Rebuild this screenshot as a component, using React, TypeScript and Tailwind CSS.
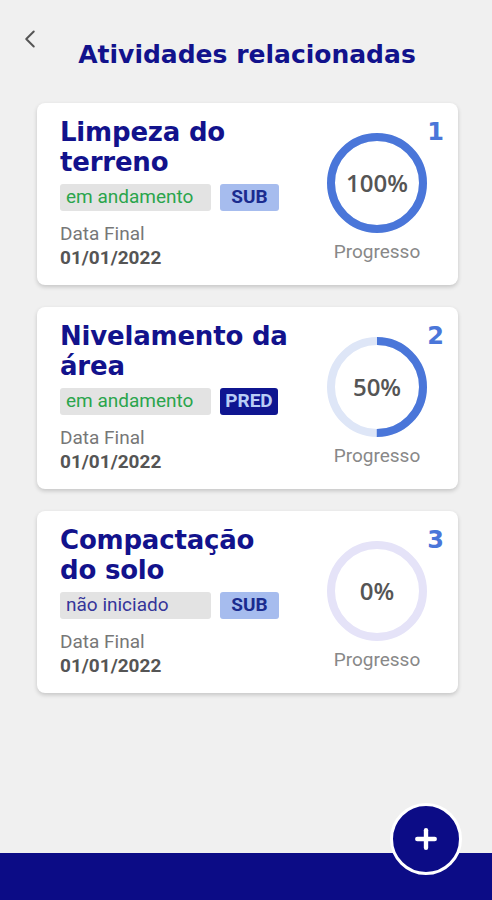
import { ChevronLeft, Plus } from "lucide-react"

type Item = {
  n: number
  title: string[]
  status: string
  statusColor: string
  tag: "SUB" | "PRED"
  pct: number
}

const items: Item[] = [
  { n: 1, title: ["Limpeza do", "terreno"], status: "em andamento", statusColor: "text-[#2aa54c]", tag: "SUB", pct: 100 },
  { n: 2, title: ["Nivelamento da", "área"], status: "em andamento", statusColor: "text-[#2aa54c]", tag: "PRED", pct: 50 },
  { n: 3, title: ["Compactação", "do solo"], status: "não iniciado", statusColor: "text-[#35359a]", tag: "SUB", pct: 0 },
]

function Ring({ pct }: { pct: number }) {
  const r = 46
  const c = 2 * Math.PI * r
  const track = pct === 0 ? "#e5e3f8" : "#dee6f7"
  return (
    <div className="relative h-[100px] w-[100px]">
      <svg width="100" height="100" viewBox="0 0 100 100" className="-rotate-90">
        <circle cx="50" cy="50" r={r} fill="none" stroke={track} strokeWidth="8" />
        {pct > 0 && (
          <circle
            cx="50"
            cy="50"
            r={r}
            fill="none"
            stroke="#4a76d9"
            strokeWidth="8"
            strokeDasharray={`${(c * pct) / 100} ${c}`}
          />
        )}
      </svg>
      <div className="absolute inset-0 flex items-center justify-center font-['Open_Sans',sans-serif] text-[24px] font-semibold text-[#555]">
        {pct}%
      </div>
    </div>
  )
}

function Card({ item }: { item: Item }) {
  return (
    <div className="flex h-[182px] w-[421px] rounded-[8px] bg-white pl-[23px] pr-[14px] shadow-[0_2px_4px_rgba(0,0,0,0.18)]">
      <div className="flex-1 pt-[14px]">
        <div className="font-['DejaVu_Sans',sans-serif] text-[26px] font-bold leading-[30px] tracking-[-0.2px] text-[#12128c]">
          {item.title.map((t) => (
            <div key={t}>{t}</div>
          ))}
        </div>
        <div className="mt-[7px] flex gap-[9px]">
          <div className={`flex h-[27px] w-[151px] items-center rounded-[3px] bg-[#e3e3e3] px-[6px] text-[19px] ${item.statusColor}`}>
            {item.status}
          </div>
          {item.tag === "SUB" ? (
            <div className="flex h-[27px] w-[59px] items-center justify-center rounded-[3px] bg-[#a6bcee] text-[19px] font-bold text-[#1a2b8f]">
              SUB
            </div>
          ) : (
            <div className="flex h-[27px] w-[58px] items-center justify-center rounded-[3px] bg-[#0f1590] text-[19px] font-bold text-[#b9cdf5]">
              PRED
            </div>
          )}
        </div>
        <div className="mt-[12px] text-[19px] leading-[22px] text-[#777]">Data Final</div>
        <div className="mt-[2px] text-[19px] font-bold leading-[22px] text-[#555]">01/01/2022</div>
      </div>
      <div className="flex w-[100px] flex-col items-center pt-[30px]">
        <Ring pct={item.pct} />
        <div className="mt-[8px] text-[19px] leading-[22px] text-[#888]">Progresso</div>
      </div>
      <div className="w-[17px] pt-[15px] text-right font-['DejaVu_Sans',sans-serif] text-[24px] font-bold leading-[28px] text-[#4a76d9]">
        {item.n}
      </div>
    </div>
  )
}

export default function App() {
  return (
    <div className="flex min-h-[900px] w-[492px] flex-col bg-[#f0f0f0] font-['Roboto',sans-serif]">
      <div className="flex-1">
        <div className="relative flex h-[103px] justify-center pt-[37px]">
          <ChevronLeft className="absolute left-[15px] top-[24px] h-[30px] w-[30px] text-[#555]" strokeWidth={1.6} />
          <h1 className="pl-[2px] font-['DejaVu_Sans',sans-serif] text-[25px] font-bold leading-[36px] text-[#12128c]">
            Atividades relacionadas
          </h1>
        </div>
        <div className="flex flex-col gap-[22px] pl-[37px]">
          {items.map((it) => (
            <Card key={it.n} item={it} />
          ))}
        </div>
      </div>
      <div className="relative h-[47px] bg-[#0c0c86]">
        <button className="absolute right-[30px] top-[-50px] flex h-[72px] w-[72px] items-center justify-center rounded-full border-[3px] border-white bg-[#0c0c86] text-white">
          <Plus className="h-[30px] w-[30px]" strokeWidth={3.5} />
        </button>
      </div>
    </div>
  )
}
